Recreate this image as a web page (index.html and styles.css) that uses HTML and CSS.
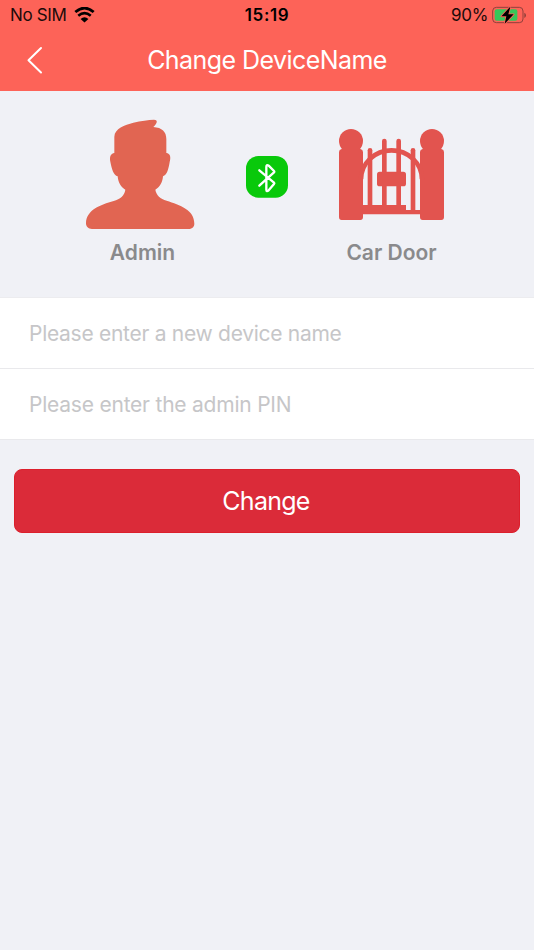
FILE: index.html
```
<!DOCTYPE html>
<html lang="en">
<head>
<meta charset="utf-8">
<meta name="viewport" content="width=device-width, initial-scale=1">
<title>Change DeviceName</title>
<link rel="stylesheet" href="styles.css">
</head>
<body>
<header class="header">
  <div class="status">
    <div class="status-left">
      <span class="carrier">No SIM</span>
      <svg class="wifi" viewBox="0 0 64 48" aria-hidden="true">
        <path d="M4 15 Q32 -9 60 15" fill="none" stroke="#000" stroke-width="8.5"/>
        <path d="M13 26 Q32 10 51 26" fill="none" stroke="#000" stroke-width="8"/>
        <path d="M20 36 Q32 26 44 36 L32 47Z" fill="#000"/>
      </svg>
    </div>
    <time class="clock">15:19</time>
    <div class="status-right">
      <span class="percent">90%</span>
      <svg class="battery" viewBox="0 0 102 54" aria-hidden="true">
        <rect x="2" y="4" width="91" height="46" rx="11" fill="none" stroke="#91403b" stroke-width="3"/>
        <path d="M97 20 Q102 22 102 28 T97 36Z" fill="#91403b"/>
        <rect x="8" y="10" width="68" height="34" rx="6" fill="#35c759"/>
        <path d="M54 3 L28 31 H43 L38 53 L65 25 H49 L55 3Z" fill="#000" stroke="#fd6358" stroke-width="5" paint-order="stroke" stroke-linejoin="round"/>
      </svg>
    </div>
  </div>
  <div class="navbar">
    <svg class="back" viewBox="0 0 16 28" aria-hidden="true"><path d="M14 2 L1.5 14.3 L14 26.5" fill="none" stroke="#fff" stroke-width="2" stroke-linecap="round" stroke-linejoin="round"/></svg>
    <h1 class="title">Change DeviceName</h1>
  </div>
</header>
<main>
  <section class="devices">
    <div class="device">
      <svg class="admin-icon" viewBox="30 27 330 333" aria-hidden="true">
        <path fill="#e16552" d="M118 129 V80 C119 55 149 45 175 38 C198 32 220 30 237 29 C248 29 249 38 235 51 C261 53 274 65 274 87 V129 C286 131 288 141 284 156 C281 176 276 195 264 199 C263 216 255 231 241 239 C244 256 256 266 275 272 C315 285 358 299 358 341 C358 351 350 357 340 357 H51 C40 357 33 350 33 340 C34 299 76 285 116 273 C136 267 148 257 151 239 C137 231 129 216 128 199 C115 195 110 176 106 155 C103 140 107 131 118 129Z"/>
      </svg>
      <span class="device-name admin-name">Admin</span>
    </div>
    <svg class="bluetooth" viewBox="0 0 126 126" aria-hidden="true">
      <rect width="126" height="125" rx="37" fill="#09c90b"/>
      <path d="M40 43 L84 80 Q86 82 84 84 L68 103 Q61 109 61 101 V33 Q61 24 68 29 L84 45 Q86 47 84 49 L40 89" fill="none" stroke="#fff" stroke-width="7" stroke-linecap="round" stroke-linejoin="round"/>
    </svg>
    <div class="device">
      <svg class="gate-icon" viewBox="42 42 315 273" aria-hidden="true">
        <g fill="#e2544f">
          <circle cx="78" cy="78" r="36"/><circle cx="321" cy="78" r="36"/>
          <path d="M53 96 H103 L106 102 Q114 104 114 111 V306 Q114 315 106 315 H50 Q42 315 42 306 V111 Q42 104 50 102Z"/>
          <path d="M296 96 H346 L349 102 Q357 104 357 111 V306 Q357 315 349 315 H293 Q285 315 285 306 V111 Q285 104 293 102Z"/>
          <rect x="128" y="99" width="14" height="178" rx="7"/>
          <rect x="171" y="71" width="14" height="206" rx="7"/>
          <rect x="214" y="71" width="14" height="206" rx="7"/>
          <rect x="257" y="99" width="14" height="192" rx="7"/>
          <rect x="156" y="170" width="87" height="44" rx="8"/>
          <path d="M112 270 H243 V285 H287 V298 H112Z"/>
        </g>
        <path d="M108 193 A91.5 87 0 0 1 291 193" fill="none" stroke="#e2544f" stroke-width="14"/>
      </svg>
      <span class="device-name door-name">Car Door</span>
    </div>
  </section>
  <section class="form">
    <div class="field"><span class="hint">Please enter a new device name</span></div>
    <div class="field"><span class="hint hint-pin">Please enter the admin PIN</span></div>
  </section>
  <button class="submit" type="button">Change</button>
</main>
</body>
</html>
```
FILE: styles.css
```
* { box-sizing: border-box; }

body {
  margin: 0;
  min-height: 950px;
  background: #f0f1f6;
  font-family: Inter, "Liberation Sans", sans-serif;
}

svg { display: block; flex: none; }

.header {
  height: 91px;
  background: #fd6358;
}

.status {
  display: grid;
  grid-template-columns: 1fr auto 1fr;
  align-items: center;
  height: 30px;
  padding: 0 8px 0 10px;
  color: #1c0b0a;
  font-size: 17px;
  line-height: 30px;
}

.status-left, .status-right { display: flex; align-items: center; }
.status-left { gap: 7px; }
.status-right { justify-content: flex-end; gap: 4px; }
.carrier { letter-spacing: -0.35px; }
.percent { letter-spacing: -0.35px; }
.clock { margin-right: 2px; color: #000; font-weight: 600; letter-spacing: 0.6px; }
.wifi { width: 21px; height: 16px; }
.battery { width: 34px; height: 18px; }

.navbar {
  display: grid;
  grid-template-columns: 43px 1fr 43px;
  align-items: center;
  height: 60px;
}

.back { width: 16px; height: 28px; margin-left: 27px; }

.title {
  margin: 0;
  color: #fff;
  font-size: 25px;
  font-weight: 400;
  line-height: 60px;
  letter-spacing: -0.56px;
  text-align: center;
  white-space: nowrap;
}

.devices {
  display: grid;
  grid-template-columns: 110px 42px 110px;
  justify-content: space-between;
  height: 207px;
  padding: 28px 87px 0 85px;
}

.device {
  display: flex;
  flex-direction: column;
  align-items: center;
}

.admin-icon { width: 110px; height: 111px; }
.gate-icon { width: 105px; height: 91px; margin: 10px 2px 10px 0; }
.bluetooth { width: 42px; height: 42px; margin: 37px 0 0 1px; }

.device-name {
  margin-top: 8px;
  color: #8a8a8c;
  font-size: 21px;
  font-weight: 600;
  line-height: 30px;
  white-space: nowrap;
}

.admin-name { margin-left: 5px; }
.door-name { margin-right: 1px; }

.form {
  background: #fff;
  box-shadow: 0 -1px #ececef;
}

.field {
  display: flex;
  align-items: center;
  height: 71px;
  padding: 2px 0 0 29px;
  border-bottom: 1px solid #e9e9ec;
}

.hint {
  color: #c6c6c8;
  font-size: 21px;
  line-height: 30px;
  letter-spacing: -0.28px;
  white-space: nowrap;
}

.hint-pin { letter-spacing: -0.22px; }

.submit {
  display: block;
  width: 506px;
  height: 64px;
  margin: 29px auto 0;
  padding: 0 2px 0 0;
  border: 1px solid #dc1f2c;
  border-radius: 8px;
  background: #db2b39;
  color: #fff;
  font: 400 25px/62px Inter, "Liberation Sans", sans-serif;
  letter-spacing: -0.75px;
}
```
